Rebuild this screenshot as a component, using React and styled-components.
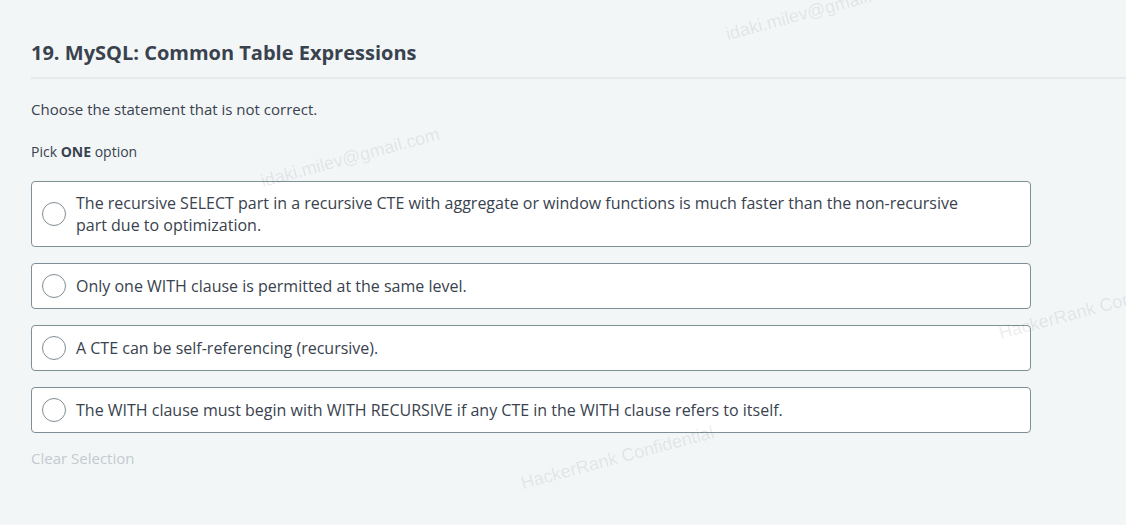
import React from "react";
import styled, { createGlobalStyle } from "styled-components";

const Global = createGlobalStyle`
  html, body { margin: 0; padding: 0; background: #f3f6f7; }
  body { font-family: "Open Sans", "Noto Sans", sans-serif; color: #39424e; overflow: hidden; }
`;

const Page = styled.div`
  position: relative;
  width: 1126px;
  height: 525px;
  overflow: hidden;
  background: #f3f6f7;
`;

const Content = styled.div`
  padding: 39px 0 0 31px;
`;

const Header = styled.div`
  padding-bottom: 10px;
  border-bottom: 2px solid #e6eaec;
`;

const Title = styled.h1`
  margin: 0;
  font-size: 20px;
  line-height: 28px;
  font-weight: 700;
  color: #39424e;
`;

const Prompt = styled.p`
  margin: 20px 0 0;
  font-size: 15px;
  line-height: 21px;
  color: #39424e;
`;

const Instruction = styled.p`
  margin: 22px 0 0;
  font-size: 14px;
  line-height: 19px;
  color: #39424e;
  b { font-weight: 700; }
`;

const Options = styled.div`
  margin-top: 20px;
  width: 1000px;
  display: flex;
  flex-direction: column;
  gap: 16px;
`;

const Option = styled.label`
  display: flex;
  align-items: center;
  gap: 10px;
  padding: 10px 50px 10px 10px;
  background: #ffffff;
  border: 1px solid #7e9095;
  border-radius: 4px;
  cursor: pointer;
`;

const Radio = styled.span`
  flex: 0 0 auto;
  width: 24px;
  height: 24px;
  box-sizing: border-box;
  border-radius: 50%;
  border: 1.5px solid #7f8d94;
  background: #fff;
`;

const OptionText = styled.span`
  font-size: 16px;
  line-height: 22px;
  color: #39424e;
`;

const Clear = styled.div`
  margin-top: 15px;
  font-size: 15px;
  line-height: 21px;
  color: #c3cbd0;
`;

const Watermark = styled.div`
  position: absolute;
  left: ${(p) => p.$x}px;
  top: ${(p) => p.$y}px;
  font-family: "Liberation Sans", Arial, sans-serif;
  font-size: 18px;
  line-height: 21px;
  color: rgba(57, 66, 78, 0.11);
  white-space: nowrap;
  transform: rotate(-15deg);
  transform-origin: left bottom;
  pointer-events: none;
`;

const options = [
  "The recursive SELECT part in a recursive CTE with aggregate or window functions is much faster than the non-recursive part due to optimization.",
  "Only one WITH clause is permitted at the same level.",
  "A CTE can be self-referencing (recursive).",
  "The WITH clause must begin with WITH RECURSIVE if any CTE in the WITH clause refers to itself.",
];

export default function App() {
  return (
    <Page>
      <Global />
      <Content>
        <Header>
          <Title>19. MySQL: Common Table Expressions</Title>
        </Header>
        <Prompt>Choose the statement that is not correct.</Prompt>
        <Instruction>
          Pick <b>ONE</b> option
        </Instruction>
        <Options>
          {options.map((t) => (
            <Option key={t}>
              <Radio />
              <OptionText>{t}</OptionText>
            </Option>
          ))}
        </Options>
        <Clear>Clear Selection</Clear>
      </Content>
      <Watermark $x={729} $y={24}>idaki.milev@gmail.com</Watermark>
      <Watermark $x={264} $y={171}>idaki.milev@gmail.com</Watermark>
      <Watermark $x={1002} $y={323}>HackerRank Confidential</Watermark>
      <Watermark $x={524} $y={473}>HackerRank Confidential</Watermark>
    </Page>
  );
}
